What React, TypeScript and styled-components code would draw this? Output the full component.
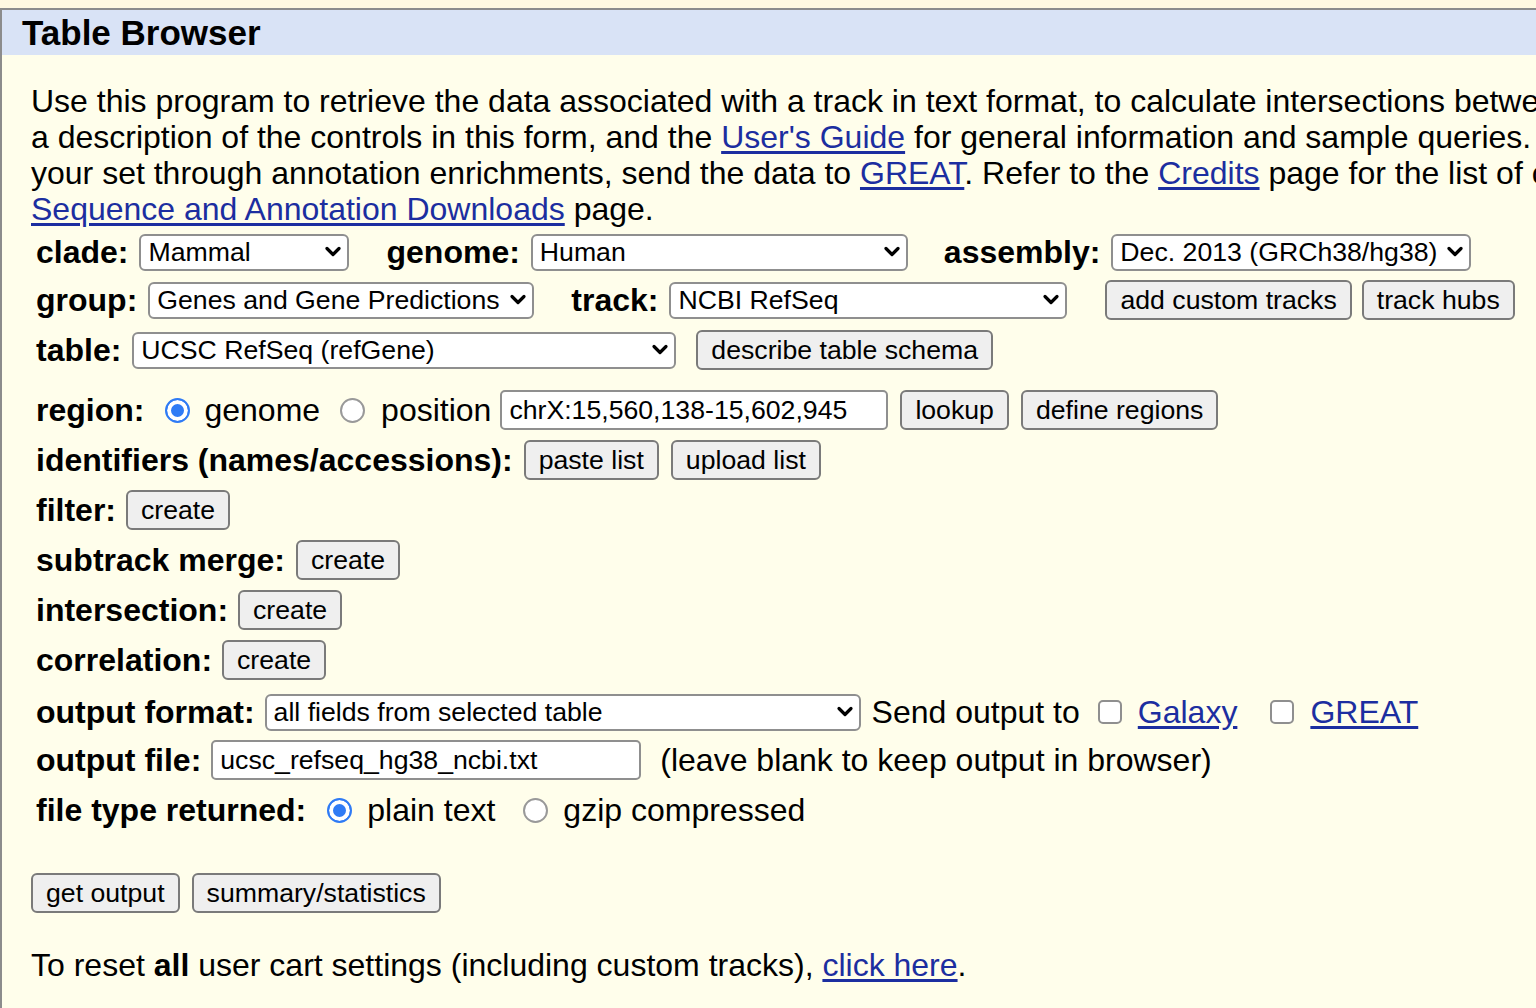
import React from "react";
import styled, { createGlobalStyle } from "styled-components";

const GlobalStyle = createGlobalStyle`
  html, body {
    margin: 0;
    overflow: hidden;
    background: #fff9e1;
    font-family: "Liberation Sans", Arial, sans-serif;
    color: #000;
  }
`;

const Page = styled.div`
  padding-top: 8px;
`;

const Panel = styled.section`
  width: 1720px;
  min-height: 1100px;
  border-top: 2px solid #8c8c8c;
  border-left: 2px solid #8c8c8c;
  background: #fffeeb;
`;

const TitleBar = styled.h1`
  margin: 0;
  height: 45px;
  line-height: 46px;
  padding-left: 20px;
  background: #d9e3f6;
  font-size: 35px;
  font-weight: 700;
`;

const Body = styled.div`
  padding: 28px 0 0 29px;
`;

const Intro = styled.p`
  margin: 0;
  font-size: 32px;
  line-height: 36px;
  white-space: nowrap;
`;

const Row = styled.div<{ $mt?: number; $flush?: boolean }>`
  display: flex;
  align-items: center;
  height: 48px;
  margin-top: ${(p) => p.$mt ?? 0}px;
  padding-left: ${(p) => (p.$flush ? 0 : 5)}px;
  white-space: nowrap;
`;

const Label = styled.b<{ $ml?: number }>`
  font-size: 32px;
  font-weight: 700;
  margin-left: ${(p) => p.$ml ?? 0}px;
`;

const Text = styled.span<{ $ml?: number }>`
  font-size: 32px;
  margin-left: ${(p) => p.$ml ?? 0}px;
`;

const Link = styled.a<{ $ml?: number }>`
  color: #1c2ea0;
  text-decoration: underline;
  text-underline-offset: 3px;
  margin-left: ${(p) => p.$ml ?? 0}px;
`;

const SelectBox = styled.div<{ $w: number; $ml?: number }>`
  box-sizing: border-box;
  display: flex;
  align-items: center;
  justify-content: space-between;
  width: ${(p) => p.$w}px;
  height: 37px;
  margin-left: ${(p) => p.$ml ?? 0}px;
  padding: 0 5px 0 7px;
  border: 2px solid #8f8f8f;
  border-radius: 6px;
  background: #fff;
  font-size: 26.67px;
  overflow: hidden;
`;

const Button = styled.button<{ $ml?: number }>`
  box-sizing: border-box;
  height: 40px;
  margin-left: ${(p) => p.$ml ?? 0}px;
  padding: 0 13px;
  border: 2px solid #7a7a7a;
  border-radius: 6px;
  background: #efefef;
  color: #000;
  font-family: inherit;
  font-size: 26.67px;
`;

const TextBox = styled.input<{ $w: number; $ml?: number }>`
  box-sizing: border-box;
  width: ${(p) => p.$w}px;
  height: 40px;
  margin-left: ${(p) => p.$ml ?? 0}px;
  padding: 0 7px;
  border: 2px solid #8f8f8f;
  border-radius: 5px;
  background: #fff;
  color: #000;
  font-family: inherit;
  font-size: 26.67px;
`;

const Radio = styled.span<{ $on?: boolean; $ml?: number }>`
  box-sizing: border-box;
  display: inline-block;
  flex: none;
  width: 25px;
  height: 25px;
  margin-left: ${(p) => p.$ml ?? 0}px;
  border-radius: 50%;
  background: ${(p) => (p.$on ? "#2f7bf5" : "#fff")};
  border: 2px solid ${(p) => (p.$on ? "#2f7bf5" : "#999")};
  box-shadow: ${(p) => (p.$on ? "inset 0 0 0 4px #fff" : "none")};
`;

const Check = styled.span<{ $ml?: number }>`
  box-sizing: border-box;
  display: inline-block;
  flex: none;
  width: 24px;
  height: 24px;
  margin-left: ${(p) => p.$ml ?? 0}px;
  border: 2px solid #8f8f8f;
  border-radius: 5px;
  background: #fff;
`;

const Chevron = () => (
  <svg width="18" height="12" viewBox="0 0 18 12">
    <path
      d="M3 2.5 L9 8.5 L15 2.5"
      fill="none"
      stroke="#000"
      strokeWidth="3.2"
      strokeLinecap="round"
      strokeLinejoin="round"
    />
  </svg>
);

const Select: React.FC<{ w: number; ml?: number; children: React.ReactNode }> = ({
  w,
  ml,
  children,
}) => (
  <SelectBox $w={w} $ml={ml}>
    <span>{children}</span>
    <Chevron />
  </SelectBox>
);

const App: React.FC = () => {
  return (
    <>
      <GlobalStyle />
      <Page>
        <Panel>
          <TitleBar>Table Browser</TitleBar>
          <Body>
            <Intro>
              Use this program to retrieve the data associated with a track in text format, to
              calculate intersections between tracks, and to retrieve DNA sequence covered by a
              track.
              <br />
              a description of the controls in this form, and the <Link href="#">User's Guide</Link>{" "}
              for general information and sample queries. For more complex queries, you may want to
              use Galaxy.
              <br />
              your set through annotation enrichments, send the data to <Link href="#">GREAT</Link>.
              Refer to the <Link href="#">Credits</Link> page for the list of contributors and usage
              restrictions.
              <br />
              <Link href="#">Sequence and Annotation Downloads</Link> page.
            </Intro>

            <Row $mt={1}>
              <Label>clade:</Label>
              <Select w={210} ml={11}>Mammal</Select>
              <Label $ml={37}>genome:</Label>
              <Select w={377} ml={11}>Human</Select>
              <Label $ml={36}>assembly:</Label>
              <Select w={360} ml={11}>Dec. 2013 (GRCh38/hg38)</Select>
            </Row>

            <Row>
              <Label>group:</Label>
              <Select w={386} ml={11}>Genes and Gene Predictions</Select>
              <Label $ml={37}>track:</Label>
              <Select w={398} ml={11}>NCBI RefSeq</Select>
              <Button $ml={38}>add custom tracks</Button>
              <Button $ml={10}>track hubs</Button>
            </Row>

            <Row $mt={2}>
              <Label>table:</Label>
              <Select w={544} ml={11}>UCSC RefSeq (refGene)</Select>
              <Button $ml={20}>describe table schema</Button>
            </Row>

            <Row $mt={12}>
              <Label>region:</Label>
              <Radio $on $ml={21} />
              <Text $ml={14}>genome</Text>
              <Radio $ml={20} />
              <Text $ml={16}>position</Text>
              <TextBox $w={388} $ml={9} defaultValue="chrX:15,560,138-15,602,945" />
              <Button $ml={12}>lookup</Button>
              <Button $ml={12}>define regions</Button>
            </Row>

            <Row $mt={2}>
              <Label>identifiers (names/accessions):</Label>
              <Button $ml={11}>paste list</Button>
              <Button $ml={12}>upload list</Button>
            </Row>

            <Row $mt={2}>
              <Label>filter:</Label>
              <Button $ml={10}>create</Button>
            </Row>

            <Row $mt={2}>
              <Label>subtrack merge:</Label>
              <Button $ml={11}>create</Button>
            </Row>

            <Row $mt={2}>
              <Label>intersection:</Label>
              <Button $ml={10}>create</Button>
            </Row>

            <Row $mt={2}>
              <Label>correlation:</Label>
              <Button $ml={10}>create</Button>
            </Row>

            <Row $mt={4}>
              <Label>output format:</Label>
              <Select w={596} ml={10}>all fields from selected table</Select>
              <Text $ml={11}>Send output to</Text>
              <Check $ml={18} />
              <Text $ml={16}>
                <Link href="#">Galaxy</Link>
              </Text>
              <Check $ml={33} />
              <Text $ml={16}>
                <Link href="#">GREAT</Link>
              </Text>
            </Row>

            <Row>
              <Label>output file:</Label>
              <TextBox $w={430} $ml={10} defaultValue="ucsc_refseq_hg38_ncbi.txt" />
              <Text $ml={19}>(leave blank to keep output in browser)</Text>
            </Row>

            <Row $mt={2}>
              <Label>file type returned:</Label>
              <Radio $on $ml={21} />
              <Text $ml={15}>plain text</Text>
              <Radio $ml={28} />
              <Text $ml={15}>gzip compressed</Text>
            </Row>

            <Row $mt={35} $flush>
              <Button>get output</Button>
              <Button $ml={12}>summary/statistics</Button>
            </Row>

            <Row $mt={24} $flush>
              <Text>
                To reset <b>all</b> user cart settings (including custom tracks),{" "}
                <Link href="#">click here</Link>.
              </Text>
            </Row>
          </Body>
        </Panel>
      </Page>
    </>
  );
};

export default App;
